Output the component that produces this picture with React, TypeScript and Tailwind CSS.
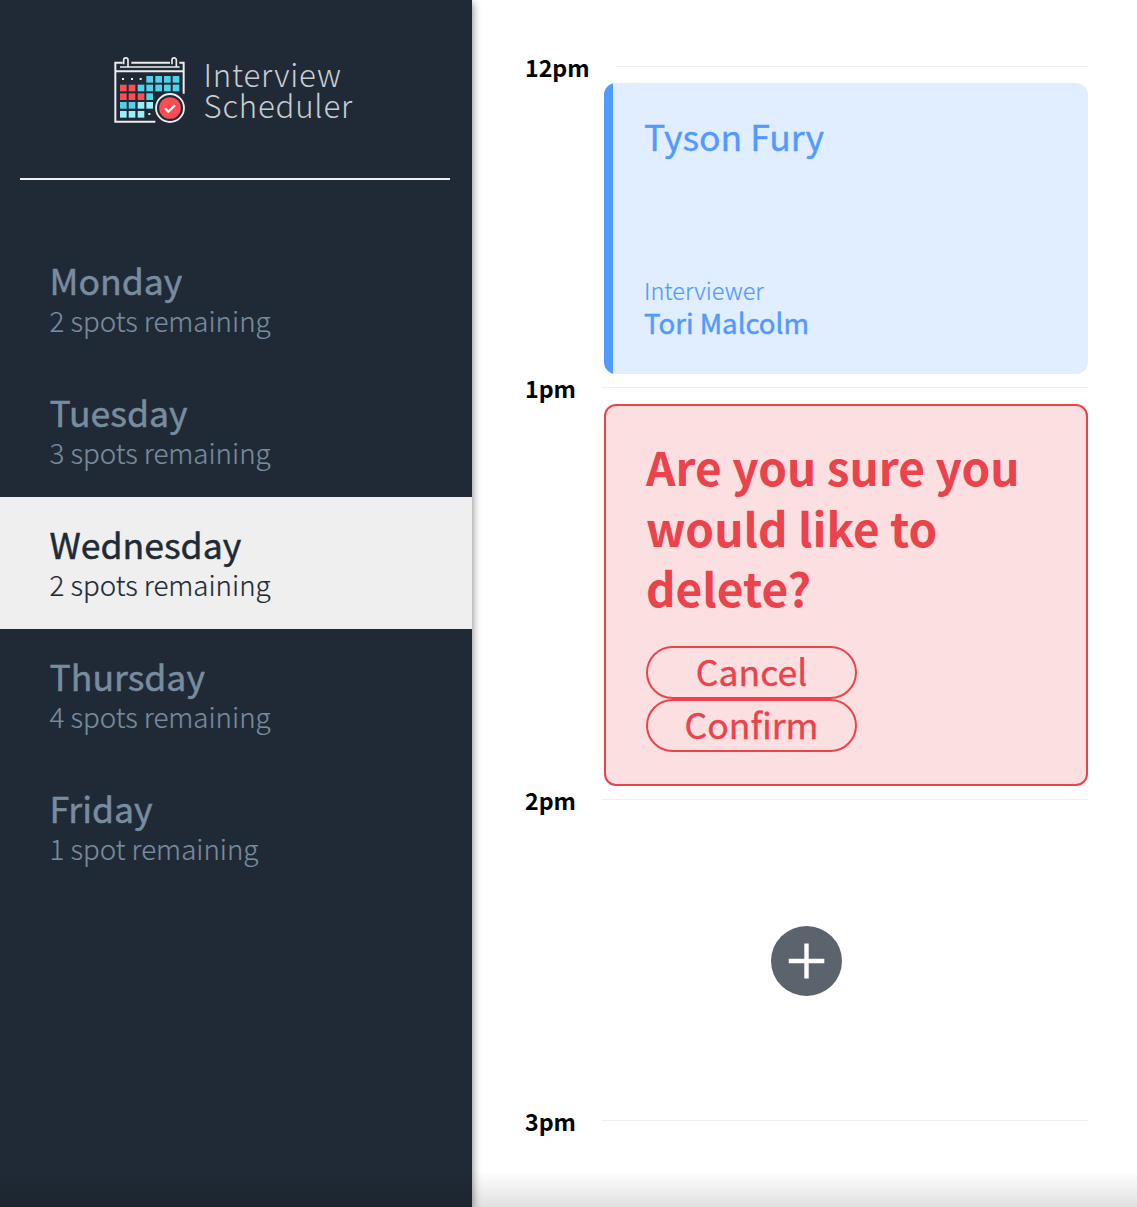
import type { ReactNode } from "react";

const days = [
  { name: "Monday", spots: "2 spots remaining" },
  { name: "Tuesday", spots: "3 spots remaining" },
  { name: "Wednesday", spots: "2 spots remaining" },
  { name: "Thursday", spots: "4 spots remaining" },
  { name: "Friday", spots: "1 spot remaining" },
];

// Cells of the calendar icon: column x, row y, colour
const CYAN = "#4fd3ea";
const RED = "#ff4b52";
const PALE = "#9ceef8";
const cells: [number, number, string][] = [
  [123, 78, CYAN], [150, 78, CYAN], [176, 78, CYAN], [202, 78, CYAN],
  [44, 104, RED], [70, 104, RED], [97, 104, CYAN], [123, 104, CYAN], [150, 104, CYAN], [176, 104, CYAN], [202, 104, CYAN],
  [44, 130, RED], [70, 130, RED], [97, 130, RED], [123, 130, CYAN],
  [44, 156, CYAN], [70, 156, CYAN], [97, 156, PALE], [123, 156, PALE],
  [44, 183, PALE], [70, 183, PALE], [97, 183, PALE],
];

function CalendarLogo() {
  return (
    <svg viewBox="26 18 216 202" className="h-[67.33px] w-[72px] shrink-0" fill="none">
      <g stroke="#ececec" strokeWidth="6">
        <path d="M52 38H30V215H150" />
        <path d="M78 38H194M222 38H235V131" />
        <path d="M30 64H235" />
        <path d="M44 51H223" strokeWidth="5" />
        <path d="M55 43V30a6.5 6.5 0 0 1 13 0V51" strokeWidth="5" />
        <path d="M200 43V30a6.5 6.5 0 0 1 13 0V51" strokeWidth="5" />
      </g>
      {cells.map(([x, y, color]) => (
        <rect key={`${x}-${y}`} x={x} y={y} width="20" height="20" fill={color} />
      ))}
      <g fill="#ececec">
        <rect x="50" y="84" width="6" height="6" />
        <rect x="77" y="84" width="6" height="6" />
        <rect x="103" y="84" width="6" height="6" />
        <rect x="129" y="189" width="6" height="6" />
      </g>
      <circle cx="194" cy="174" r="45" fill="#202a36" />
      <circle cx="194" cy="174" r="42" stroke="#ececec" strokeWidth="5.5" />
      <circle cx="194" cy="174" r="32.5" fill="#ff4b52" />
      <path d="M179 175l10 10 20-19" stroke="#fff" strokeWidth="6.5" />
    </svg>
  );
}

function Sidebar() {
  return (
    <aside className="relative z-10 flex w-[472px] shrink-0 flex-col bg-[#202a36] shadow-[1px_3px_8px_rgba(0,0,0,0.45)]">
      <div className="flex h-[178px] gap-[17.5px] pt-14 pl-[114px]">
        <CalendarLogo />
        <div className="pt-0.5 text-[31.2px] leading-8 font-light tracking-[0.8px] text-[#c9ccd0]">
          <p>Interview</p>
          <p className="-mt-px">Scheduler</p>
        </div>
      </div>
      <hr className="mr-[22px] ml-5 border-t-2 border-[#f0f0f0]" />
      <nav className="mt-[53px]">
        <ul>
          {days.map((day) => (
            <li
              key={day.name}
              className={
                day.name === "Wednesday"
                  ? "h-[132px] bg-[#efefef] px-[49.5px] pt-[27px] text-[#202a36]"
                  : "h-[132px] px-[49.5px] pt-[27px] text-[#788c9f]"
              }
            >
              <h2 className="text-[35.6px] leading-10 font-normal [-webkit-text-stroke:0.5px]">{day.name}</h2>
              <h3 className="text-[27.7px] leading-10 font-light [-webkit-text-stroke:0.2px]">{day.spots}</h3>
            </li>
          ))}
        </ul>
      </nav>
    </aside>
  );
}

function Slot({ time, children }: { time: string; children?: ReactNode }) {
  return (
    <article>
      <header className="flex h-[17px] gap-[26px]">
        <h4 className="-mt-[11px] text-[23.2px] leading-6 font-bold text-black">{time}</h4>
        <hr className="flex-1 border-t border-[#efefef]" />
      </header>
      {children}
    </article>
  );
}

function PillButton({ children }: { children: ReactNode }) {
  return (
    <button className="flex h-[53px] w-[211px] items-center justify-center rounded-full border-2 border-[#ea434c] pb-0.5 text-[35.6px] leading-10 [-webkit-text-stroke:0.4px]">
      {children}
    </button>
  );
}

export default function App() {
  return (
    <div className="relative flex h-[1207px] w-[1137px] overflow-hidden bg-white font-['Noto_Sans_CJK_SC','Noto_Sans',sans-serif]">
      <Sidebar />
      <main className="flex-1 pt-[66px] pr-[49px] pl-[53px]">
        <Slot time="12pm">
          <div className="mb-[13px] ml-[79px] flex h-[291px] overflow-hidden rounded-xl bg-[#e1eeff] text-[#539aff]">
            <div className="w-[9px] bg-[#539aff]" />
            <div className="flex flex-1 flex-col justify-between pt-[33px] pr-8 pb-9 pl-[31px]">
              <h2 className="text-[35.5px] leading-10 [-webkit-text-stroke:0.4px]">Tyson Fury</h2>
              <div>
                <h4 className="text-[23.5px] leading-8 font-light [-webkit-text-stroke:0.2px]">Interviewer</h4>
                <h3 className="text-[27.6px] leading-8 [-webkit-text-stroke:0.5px]">Tori Malcolm</h3>
              </div>
            </div>
          </div>
        </Slot>
        <Slot time="1pm">
          <div className="mb-[13px] ml-[79px] flex h-[382px] flex-col rounded-xl border-2 border-[#ea434c] bg-[#fce0e1] pt-[30px] pl-10 text-[#ea434c]">
            <h1 className="mb-7 w-[400px] text-[46px] leading-[60.5px] font-bold">
              Are you sure you would like to delete?
            </h1>
            <PillButton>Cancel</PillButton>
            <PillButton>Confirm</PillButton>
          </div>
        </Slot>
        <Slot time="2pm">
          <div className="flex h-[304px] justify-center pt-[110px]">
            <button aria-label="Add appointment" className="h-[71px] w-[71px]">
              <svg viewBox="0 0 71 71" className="h-full w-full">
                <ellipse cx="35.5" cy="35" rx="35.5" ry="35" fill="#5b636c" />
                <path d="M35.5 17.5V52.5M17.7 35H53.3" stroke="#fff" strokeWidth="4.4" />
              </svg>
            </button>
          </div>
        </Slot>
        <Slot time="3pm" />
      </main>
      <div className="pointer-events-none absolute inset-x-0 bottom-0 z-20 h-9 bg-linear-to-t from-black/12 to-transparent" />
    </div>
  );
}
